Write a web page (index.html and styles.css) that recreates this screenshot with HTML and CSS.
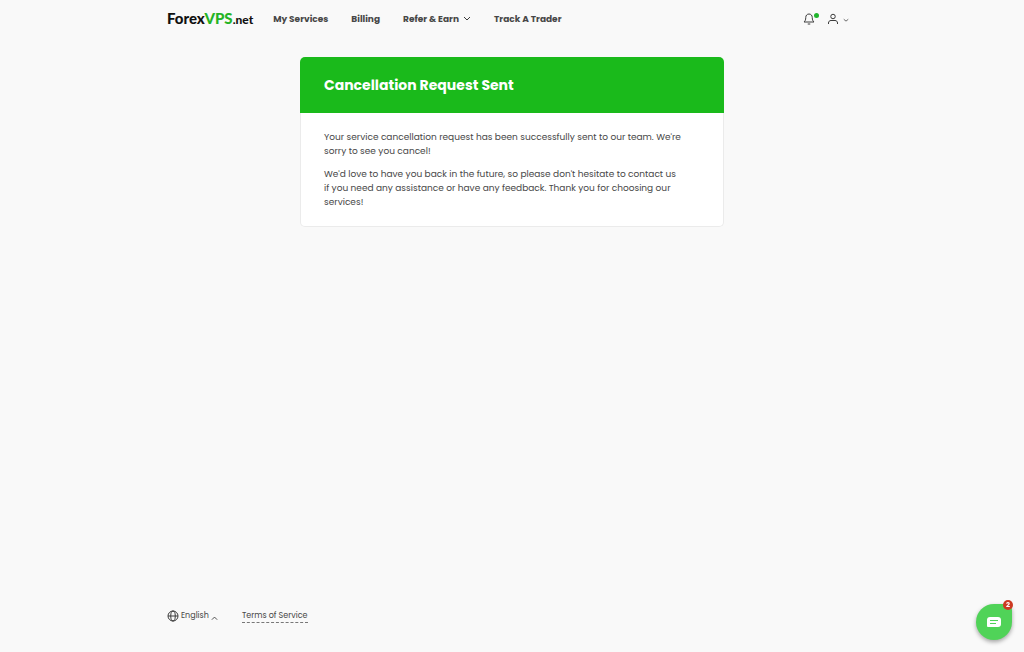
FILE: index.html
```html
<!DOCTYPE html>
<html lang="en">
<head>
  <meta charset="UTF-8">
  <meta name="viewport" content="width=device-width, initial-scale=1.0">
  <title>Cancellation Request Sent</title>
  <link rel="stylesheet" href="styles.css">
</head>
<body>

<header class="wrap header">
  <a class="logo" href="#">Forex<span class="logo-green">VPS</span><span class="logo-net">.net</span></a>
  <nav class="nav">
    <a href="#">My Services</a>
    <a href="#">Billing</a>
    <button type="button">Refer &amp; Earn
      <svg width="8" height="8" viewBox="0 0 8 8"><path d="M1 2l3 3 3-3"/></svg>
    </button>
    <a href="#">Track A Trader</a>
  </nav>
  <div class="tools">
    <button type="button" class="bell" aria-label="Notifications">
      <svg width="12" height="12" viewBox="0 0 24 24"><path d="M12 2c-4 0-6.500 3-6.500 7 0 5-1 6.500-3.500 9h20c-2.500-2.500-3.500-4-3.500-9 0-4-2.500-7-6.500-7zM9.500 22h5"/></svg>
      <span class="dot"></span>
    </button>
    <button type="button" class="account" aria-label="Account">
      <svg width="12" height="12" viewBox="0 0 24 24"><circle cx="12" cy="7" r="4.500"/><path d="M3 22v-2c0-3 2-5 5-5h8c3 0 5 2 5 5v2"/></svg>
      <svg class="caret" width="6" height="6" viewBox="0 0 8 8"><path d="M1 3l3 2.500 3-2.500"/></svg>
    </button>
  </div>
</header>

<main class="card">
  <h1 class="card-header">Cancellation Request Sent</h1>
  <div class="card-body">
    <p>Your service cancellation request has been successfully sent to our team. We're sorry to see you cancel!</p>
    <p>We'd love to have you back in the future, so please don't hesitate to contact us if&nbsp;you need any assistance or have any feedback. Thank you for choosing our services!</p>
  </div>
</main>

<footer class="wrap footer">
  <button type="button" class="language">
    <svg width="12" height="12" viewBox="0 0 24 24"><circle cx="12" cy="12" r="10"/><ellipse cx="12" cy="12" rx="4.500" ry="10"/><path d="M2 12h20"/></svg>
    English
    <svg class="caret" width="7" height="7" viewBox="0 0 8 8"><path d="M1 6.500l3-3 3 3"/></svg>
  </button>
  <a class="terms" href="#">Terms of Service</a>
</footer>

<button type="button" class="chat" aria-label="Open chat">
  <svg width="14" height="12" viewBox="0 0 14 12"><path class="bubble" d="M3 1h8q3 0 3 3v4q0 3-3 3H1q-1 0-1-1V4q0-3 3-3z"/><path class="lines" d="M3 4.500h8M3 7.500h6"/></svg>
  <span class="badge">2</span>
</button>

</body>
</html>
```
FILE: styles.css
```css
body {
  font-family: Poppins, Inter, sans-serif;
  margin: 0;
  min-height: 100vh;
  display: flex;
  flex-direction: column;
  font-size: 9px;
  line-height: 14px;
  color: #474747;
  background-color: #f9f9f9;
}
a {
  color: inherit;
  text-decoration: none;
}
button {
  display: flex;
  align-items: center;
  padding: 0;
  border: none;
  background: none;
  font: inherit;
  color: inherit;
  cursor: pointer;
}
svg {
  fill: none;
  stroke: #3c3c3c;
  stroke-width: 2;
}
.wrap {
  width: 90%;
  max-width: 690px;
  margin: 0 auto;
  box-sizing: border-box;
  padding-right: 8px;
  display: flex;
  align-items: center;
}
.header {
  height: 37px;
}
.logo {
  font-family: Lato, sans-serif;
  font-size: 15px;
  font-weight: 900;
  color: #111;
}
.logo-green {
  color: #25b425;
}
.logo-net {
  font-size: 12px;
}
.nav {
  display: flex;
  gap: 23px;
  margin-left: 20px;
  font-weight: 700;
}
.nav button {
  gap: 4px;
}
.nav svg {
  stroke-width: 1;
}
.tools {
  display: flex;
  gap: 12px;
  margin-left: auto;
}
.bell {
  position: relative;
}
.dot {
  position: absolute;
  top: 0;
  right: -4px;
  width: 5px;
  height: 5px;
  border-radius: 50%;
  background-color: #21b52d;
}
.account {
  gap: 4px;
}
.caret {
  margin-top: 3px;
  stroke-width: 1;
}
.card {
  width: 424px;
  max-width: 90%;
  margin: 20px auto;
}
.card-header {
  margin: 0;
  padding: 18px 24px;
  font-size: 14px;
  line-height: 20px;
  font-weight: 700;
  color: #fff;
  border-radius: 5px 5px 0 0;
  background-color: #1aba1b;
}
.card-body {
  padding: 17px 23px;
  border: 1px solid #ebebeb;
  border-top: none;
  border-radius: 0 0 5px 5px;
  background-color: #fff;
}
.card-body p {
  margin: 0 0 9px;
}
.card-body p:last-child {
  margin-bottom: 0;
}
.footer {
  gap: 24px;
  margin-top: auto;
  margin-bottom: 29px;
  font-size: 8px;
}
.language {
  gap: 2px;
}
.terms {
  line-height: 12px;
  border-bottom: 1px dashed #777;
}
.chat {
  position: fixed;
  right: 12px;
  bottom: 12px;
  width: 36px;
  height: 36px;
  justify-content: center;
  border-radius: 50% 6px 50% 50%;
  background-color: #50d358;
  box-shadow: 0 2px 4px rgba(0, 0, 0, 0.35);
}
.bubble {
  fill: #fff;
  stroke: none;
}
.lines {
  stroke: #50d358;
  stroke-width: 1;
}
.badge {
  position: absolute;
  top: -4px;
  right: -1px;
  width: 10px;
  height: 10px;
  border-radius: 50%;
  font-size: 7px;
  line-height: 10px;
  font-weight: 700;
  text-align: center;
  color: #fff;
  background-color: #cc3a22;
}
```
